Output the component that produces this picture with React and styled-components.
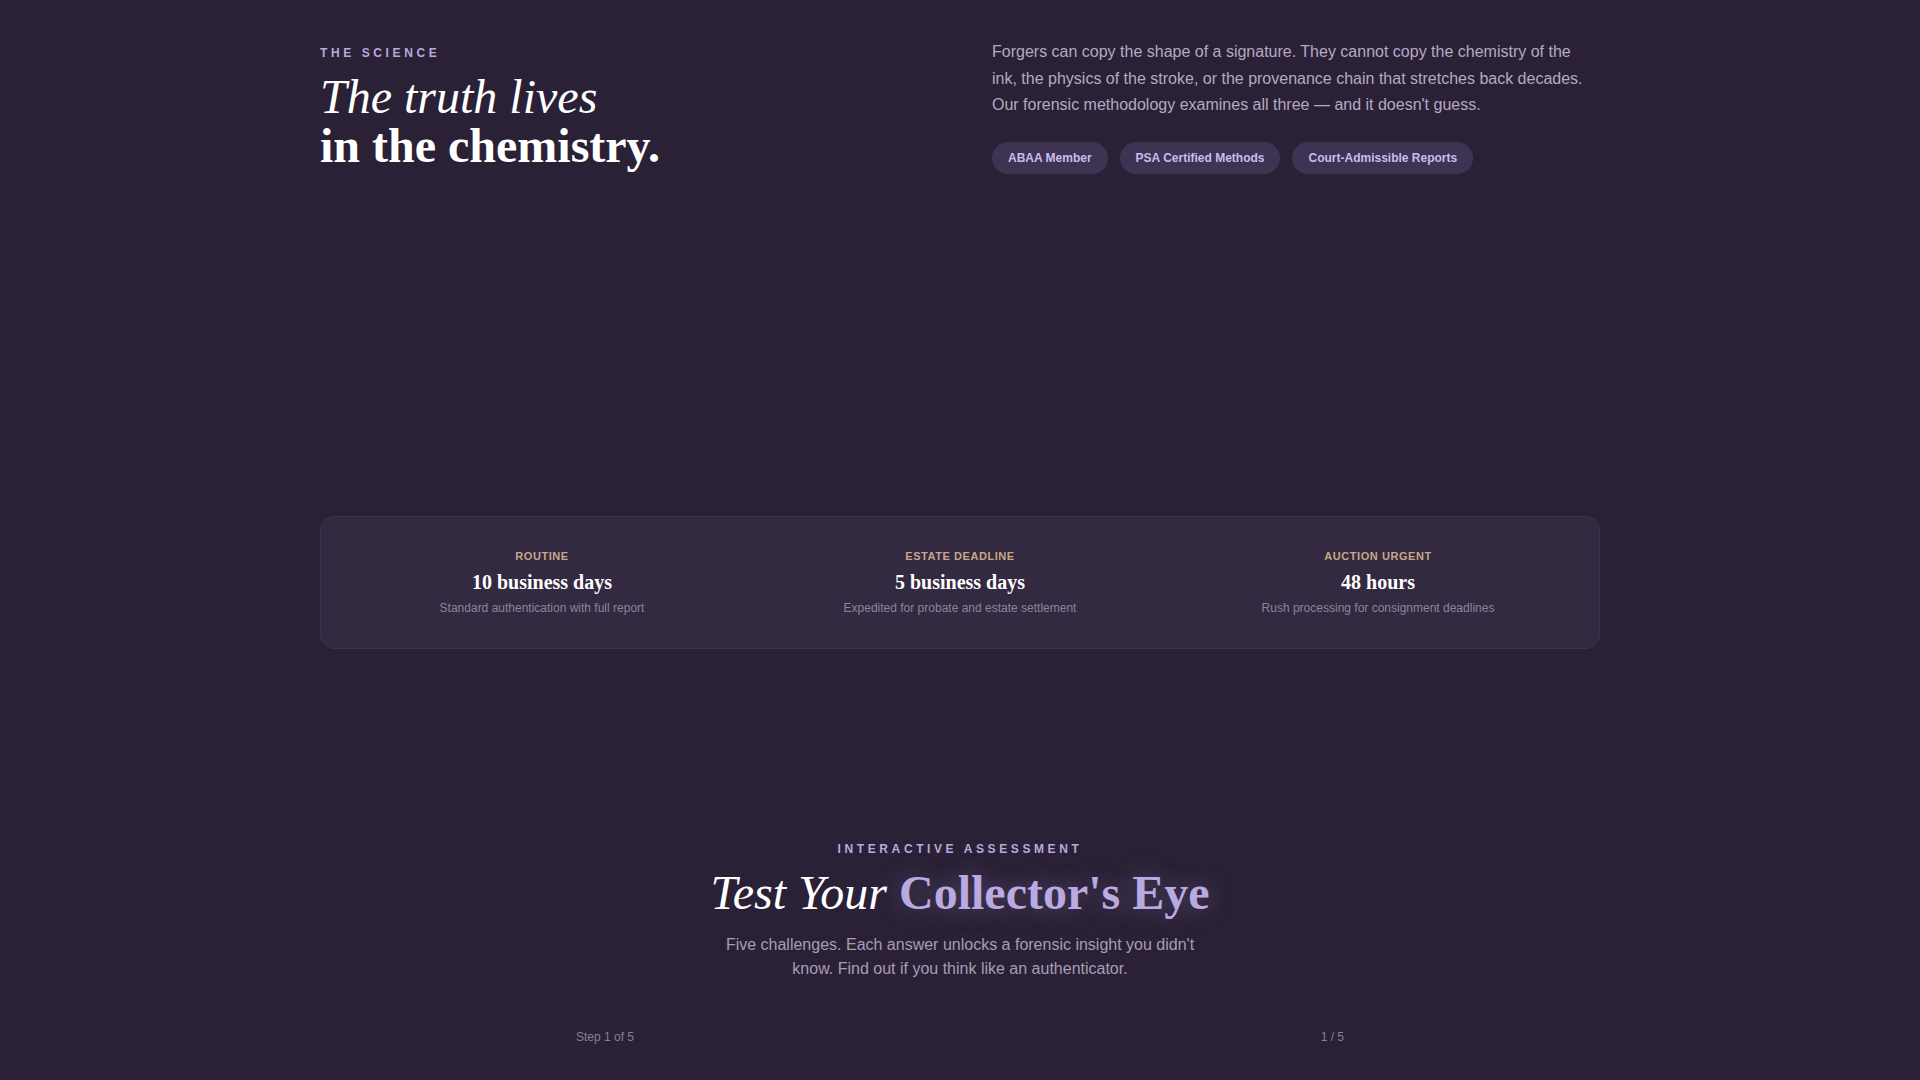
import React from 'react';
import styled, { createGlobalStyle } from 'styled-components';

const GlobalStyle = createGlobalStyle`
    * { box-sizing: border-box; }
    body {
        margin: 0;
        background: #2a2136;
        color: #ffffff;
        font-family: "Liberation Sans", Arial, sans-serif;
    }
`;

const Page = styled.main`
    min-height: 1080px;
    padding: 38px 0 40px;
`;

const Container = styled.div`
    width: 1280px;
    max-width: ${props => props.narrow ? '768px' : '1280px'};
    margin: 0 auto;
`;

const ScienceGrid = styled.section`
    display: grid;
    grid-template-columns: 1fr 1fr;
    gap: 64px;
    align-items: start;
`;

const Eyebrow = styled.div`
    font-size: 12px;
    line-height: 18px;
    font-weight: 700;
    letter-spacing: 0.3em;
    text-transform: uppercase;
    color: #b8a9dc;
    margin-top: ${props => props.offset || 0}px;
`;

const Heading = styled.h2`
    margin: 11px 0 0;
    font-family: "Liberation Serif", "Times New Roman", serif;
    font-size: 48px;
    line-height: 1.02;
    font-weight: 400;
    color: #ffffff;
`;

const ItalicLine = styled.em`
    display: block;
    font-style: italic;
    font-weight: 400;
`;

const BoldLine = styled.strong`
    display: block;
    font-weight: 700;
`;

const Lead = styled.p`
    margin: 1px 0 0;
    font-size: 16px;
    line-height: 26.5px;
    color: #b4aac3;
`;

const Pills = styled.div`
    display: flex;
    gap: 12px;
    margin-top: 23px;
`;

const Pill = styled.span`
    display: inline-flex;
    align-items: center;
    height: 32px;
    padding: 0 16px;
    border-radius: 999px;
    background: #3e3352;
    color: #cbbcee;
    font-size: 12px;
    font-weight: 700;
`;

const TurnaroundCard = styled.section`
    margin-top: 342px;
    display: grid;
    grid-template-columns: repeat(3, 1fr);
    gap: 24px;
    padding: 31px 24px 31px;
    border: 1px solid #3d3250;
    border-radius: 14px;
    background: #332940;
`;

const Tier = styled.div`
    text-align: center;
`;

const TierLabel = styled.div`
    font-size: 11px;
    line-height: 16px;
    font-weight: 700;
    letter-spacing: 0.05em;
    text-transform: uppercase;
    color: #c6a886;
`;

const TierValue = styled.div`
    margin-top: 5px;
    font-family: "Liberation Serif", "Times New Roman", serif;
    font-size: 20px;
    line-height: 26px;
    font-weight: 700;
    color: #ffffff;
`;

const TierNote = styled.div`
    margin-top: 4px;
    font-size: 12px;
    line-height: 18px;
    color: #8e839e;
`;

const Assessment = styled.section`
    margin-top: 191px;
    text-align: center;
`;

const Title = styled.h2`
    margin: 9px 0 0;
    font-family: "Liberation Serif", "Times New Roman", serif;
    font-size: 48px;
    line-height: 1.1;
    font-weight: 400;
`;

const TitleItalic = styled.em`
    font-style: italic;
    color: #ffffff;
`;

const TitleAccent = styled.span`
    font-weight: 700;
    color: #b9aae2;
    text-shadow: 0 0 24px rgba(185, 170, 226, 0.35);
`;

const Subtitle = styled.p`
    margin: 14px auto 0;
    max-width: 480px;
    font-size: 16px;
    line-height: 24px;
    color: #a79db6;
`;

const StepRow = styled.div`
    display: flex;
    justify-content: space-between;
    margin-top: 47px;
    font-size: 12px;
    line-height: 18px;
    color: #8a7f99;
`;

const tiers = [
    { label: 'Routine', value: '10 business days', note: 'Standard authentication with full report' },
    { label: 'Estate Deadline', value: '5 business days', note: 'Expedited for probate and estate settlement' },
    { label: 'Auction Urgent', value: '48 hours', note: 'Rush processing for consignment deadlines' },
];

const badges = ['ABAA Member', 'PSA Certified Methods', 'Court-Admissible Reports'];

export default function App() {
    return (
        <>
            <GlobalStyle />
            <Page>
                <Container>
                    <ScienceGrid>
                        <div>
                            <Eyebrow offset={6}>The Science</Eyebrow>
                            <Heading>
                                <ItalicLine>The truth lives</ItalicLine>
                                <BoldLine>in the chemistry.</BoldLine>
                            </Heading>
                        </div>
                        <div>
                            <Lead>
                                Forgers can copy the shape of a signature. They cannot copy the chemistry of the
                                ink, the physics of the stroke, or the provenance chain that stretches back decades.
                                Our forensic methodology examines all three — and it doesn't guess.
                            </Lead>
                            <Pills>
                                {badges.map(b => <Pill key={b}>{b}</Pill>)}
                            </Pills>
                        </div>
                    </ScienceGrid>

                    <TurnaroundCard>
                        {tiers.map(t => (
                            <Tier key={t.label}>
                                <TierLabel>{t.label}</TierLabel>
                                <TierValue>{t.value}</TierValue>
                                <TierNote>{t.note}</TierNote>
                            </Tier>
                        ))}
                    </TurnaroundCard>

                    <Assessment>
                        <Eyebrow>Interactive Assessment</Eyebrow>
                        <Title>
                            <TitleItalic>Test Your</TitleItalic> <TitleAccent>Collector's Eye</TitleAccent>
                        </Title>
                        <Subtitle>
                            Five challenges. Each answer unlocks a forensic insight you didn't know. Find out if you think like an authenticator.
                        </Subtitle>
                    </Assessment>
                </Container>
                <Container narrow>
                    <StepRow>
                        <span>Step 1 of 5</span>
                        <span>1 / 5</span>
                    </StepRow>
                </Container>
            </Page>
        </>
    );
}
